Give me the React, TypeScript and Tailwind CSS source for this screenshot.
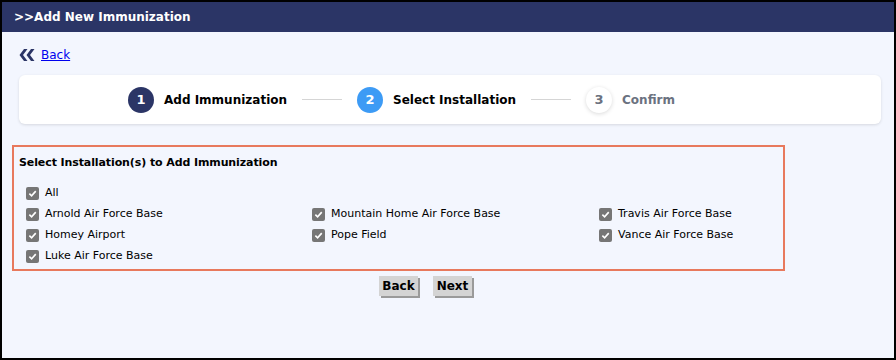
const installations = [
  'Arnold Air Force Base',
  'Mountain Home Air Force Base',
  'Travis Air Force Base',
  'Homey Airport',
  'Pope Field',
  'Vance Air Force Base',
  'Luke Air Force Base',
]

function Check({ label }: { label: string }) {
  return (
    <label className="flex items-center gap-[6px] h-[21px]">
      <span className="w-[13px] h-[13px] rounded-[2px] bg-[#767676] flex items-center justify-center">
        <svg width="9" height="9" viewBox="0 0 10 10">
          <path d="M1.5 5.2 L4 7.6 L8.6 2.4" fill="none" stroke="#fff" strokeWidth="1.8" />
        </svg>
      </span>
      <span>{label}</span>
    </label>
  )
}

function Step({ n, label, state }: { n: number; label: string; state: 'done' | 'active' | 'todo' }) {
  const circle =
    state === 'done'
      ? 'bg-[#2b3566] text-white'
      : state === 'active'
        ? 'bg-[#3d9bf5] text-white'
        : 'bg-white text-[#6b7280] shadow-[0_1px_4px_rgba(0,0,0,0.15)]'
  return (
    <div className="flex items-center gap-[10px]">
      <span className={`w-[26px] h-[26px] rounded-full flex items-center justify-center text-[13px] font-bold ${circle}`}>{n}</span>
      <span className={`text-[12px] font-bold ${state === 'todo' ? 'text-[#6b7280]' : 'text-black'}`}>{label}</span>
    </div>
  )
}

export default function App() {
  return (
    <div className="w-[896px] h-[360px] border-2 border-black bg-[#f3f6fe] flex flex-col font-['DejaVu_Sans',sans-serif] text-[11px] text-black">
      <div className="h-[30px] bg-[#2b3566] text-white font-bold text-[12px] flex items-center pl-[12px]">
        &gt;&gt;Add New Immunization
      </div>

      <div className="px-[17px] pt-[15px]">
        <div className="flex items-center gap-[5px] h-[16px]">
          <svg width="17" height="12" viewBox="0 0 17 12">
            <polygon points="5,0 8.5,0 4,6 8.5,12 5,12 0.5,6" fill="#2b3566" />
            <polygon points="12,0 15.5,0 11,6 15.5,12 12,12 7.5,6" fill="#2b3566" />
          </svg>
          <a href="#" className="text-[#0000ee] underline text-[12px]">Back</a>
        </div>

        <div className="mt-[12px] h-[49px] bg-white rounded-[6px] shadow-[0_1px_3px_rgba(0,0,0,0.12)] flex items-center pl-[109px] mr-[-4px]">
          <Step n={1} label="Add Immunization" state="done" />
          <div className="w-[40px] h-px bg-[#d5d5d5] mx-[15px]" />
          <Step n={2} label="Select Installation" state="active" />
          <div className="w-[40px] h-px bg-[#d5d5d5] mx-[15px]" />
          <Step n={3} label="Confirm" state="todo" />
        </div>
      </div>

      <div className="ml-[10px] mt-[21px] w-[773px] border-2 border-[#e8795d] px-[5px] pt-[8px] pb-[2px]">
        <div className="font-bold text-[11px] tracking-[-0.1px] mb-[11px]">Select Installation(s) to Add Immunization</div>
        <div className="pl-[7px]">
          <Check label="All" />
          <div className="grid grid-cols-[286px_287px_1fr]">
            {installations.map((s) => (
              <Check key={s} label={s} />
            ))}
          </div>
        </div>
      </div>

      <div className="flex justify-center gap-[15px] mt-[5px] pr-[45px]">
        <button className="w-[39px] h-[20px] bg-[#d4d4d4] shadow-[2px_2px_0_#9a9a9a] font-bold text-[12px]">Back</button>
        <button className="w-[39px] h-[20px] bg-[#d4d4d4] shadow-[2px_2px_0_#9a9a9a] font-bold text-[12px]">Next</button>
      </div>
    </div>
  )
}
